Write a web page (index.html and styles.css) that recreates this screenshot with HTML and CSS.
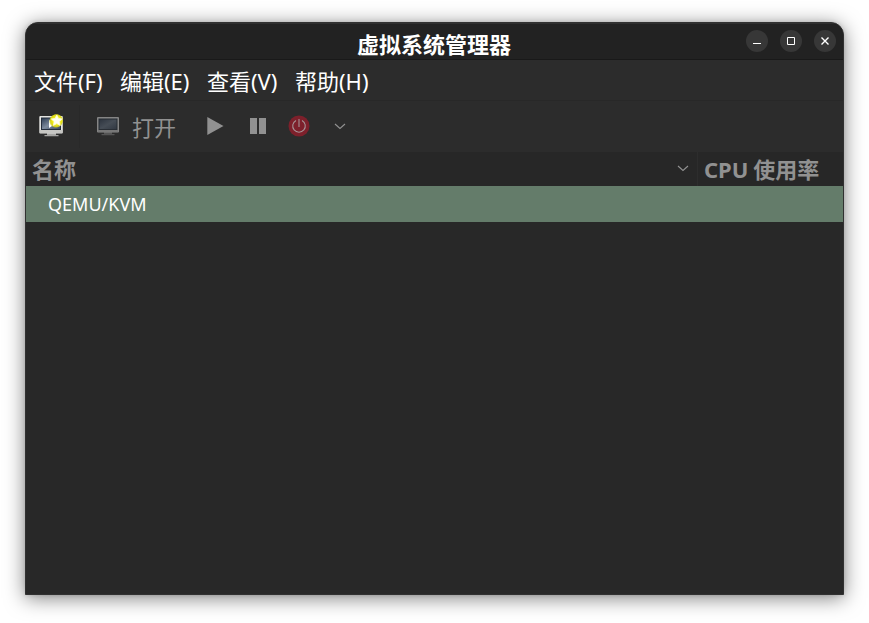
FILE: index.html
```
<!DOCTYPE html>
<html lang="zh-CN">
<head>
<meta charset="utf-8">
<title>虚拟系统管理器</title>
<link rel="stylesheet" href="styles.css">
</head>
<body>
<main class="window">
  <header class="titlebar">
    <h1 class="title">虚拟系统管理器</h1>
    <div class="controls">
      <span class="control"><svg width="22" height="22"><path d="M7 13.500h8" stroke="#fff"/></svg></span>
      <span class="control"><svg width="22" height="22"><path d="M7.500 7.500h7v7h-7z" fill="none" stroke="#fff"/></svg></span>
      <span class="control"><svg width="22" height="22"><path d="M7.500 7.500l7 7M14.500 7.500l-7 7" stroke="#fff" stroke-width="1.400"/></svg></span>
    </div>
  </header>
  <nav class="menubar">
    <span class="menu file">文件<span class="key">(F)</span></span>
    <span class="menu edit">编辑<span class="key">(E)</span></span>
    <span class="menu view">查看<span class="key">(V)</span></span>
    <span class="menu help">帮助<span class="key">(H)</span></span>
  </nav>
  <div class="toolbar">
    <div class="new">
      <svg width="26" height="26" viewBox="0 0 26 26">
        <defs>
          <linearGradient id="screen" x2="1" y2="1"><stop stop-color="#29384e"/><stop offset=".5" stop-color="#7d8b9d"/><stop offset="1" stop-color="#35445a"/></linearGradient>
          <radialGradient id="glow"><stop offset=".6" stop-color="#f2ee12"/><stop offset=".85" stop-color="#d8d51b" stop-opacity=".8"/><stop offset="1" stop-color="#c9c51b" stop-opacity="0"/></radialGradient>
        </defs>
        <path d="M9 20h9v2h2.500v1.300h-14V22H9z" fill="#a4a4a2"/>
        <rect x="1.300" y="3" width="23.500" height="17.500" rx="1" fill="#e4e4e1"/>
        <path d="M2 17h22v3H2z" fill="#c6c6c3"/>
        <rect x="3.500" y="5" width="19" height="11.500" fill="url(#screen)" stroke="#252e3c"/>
        <path d="M11 7l6 4-6 4z" fill="#fff"/>
        <path d="M11 1h14v14H11z" fill="url(#glow)"/>
        <circle cx="18.600" cy="7.500" r="6.800" fill="url(#glow)"/>
        <path d="M18.800 2l1.700 3.400 3.800.5-2.800 2.700.7 3.800-3.400-1.800-3.400 1.800.7-3.800-2.800-2.700 3.800-.5z" fill="#fffff4" stroke="#fffbd0" stroke-width=".8"/>
      </svg>
    </div>
    <div class="open">
      <svg width="22" height="20" viewBox="0 0 22 20">
        <defs><linearGradient id="dim" x2="1" y2="1"><stop stop-color="#2b323d"/><stop offset=".5" stop-color="#464d56"/><stop offset="1" stop-color="#303741"/></linearGradient></defs>
        <path d="M7 15h8v2h2.500v1.300h-13V17H7z" fill="#555"/>
        <rect width="22" height="15.500" rx="1" fill="#858585"/>
        <path d="M1 13h20v2H1z" fill="#777"/>
        <rect x="2" y="2" width="18" height="10.500" fill="url(#dim)" stroke="#292e35"/>
      </svg>
      <span>打开</span>
    </div>
    <svg class="play" width="17" height="18"><path d="M.3 0L16.500 9 .3 18z" fill="#919191"/></svg>
    <svg class="pause" width="16" height="16"><path d="M0 0h7v16H0zM9 0h7v16H9z" fill="#919191"/></svg>
    <svg class="power" width="22" height="22"><circle cx="11" cy="11" r="10.500" fill="#7d202b"/><path d="M8 5.400a6.300 6.300 0 1 0 6 0M11 4v8" fill="none" stroke="#a49295" stroke-width="1.100"/></svg>
    <svg class="arrow" width="12" height="7"><path d="M1 1l5 4.500L11 1" fill="none" stroke="#919191" stroke-width="1.100"/></svg>
  </div>
  <div class="columns">
    <div class="column name"><span>名称</span><svg width="12" height="7"><path d="M1 1l5 4.500L11 1" fill="none" stroke="#919191" stroke-width="1.100"/></svg></div>
    <div class="column cpu">CPU 使用率</div>
  </div>
  <div class="row">QEMU/KVM</div>
  <section class="empty"></section>
</main>
</body>
</html>
```
FILE: styles.css
```
* { box-sizing: border-box; }
body {
  margin: 0;
  height: 623px;
  padding: 22px 25px 28px;
  overflow: hidden;
  background: #fff;
  font: 22px/32px "Noto Sans", "Noto Sans CJK SC", sans-serif;
}
svg { display: block; flex: none; }
.window {
  width: 819px;
  height: 573px;
  display: flex;
  flex-direction: column;
  overflow: hidden;
  border: 1px solid #313131;
  border-radius: 13px 13px 0 0;
  background: #282828;
  color: #fff;
  box-shadow: 0 3px 20px rgba(0, 0, 0, .5), 0 0 4px rgba(0, 0, 0, .12);
}
.titlebar {
  height: 37px;
  flex: none;
  display: grid;
  grid-template-columns: 1fr auto 1fr;
  background: #222;
  border-top: 1px solid #303030;
  border-bottom: 1px solid #191919;
}
.title {
  grid-column: 2;
  margin: 3px 1px 0 0;
  font: 700 22px/32px "Noto Sans CJK SC", sans-serif;
}
.controls {
  display: flex;
  justify-content: flex-end;
  gap: 12px;
  padding: 6px 7px 0 0;
}
.control { width: 22px; height: 22px; border-radius: 50%; background: #373737; }
.menubar {
  height: 41px;
  flex: none;
  display: flex;
  padding: 5px 0 0 8px;
  background: #2c2c2c;
  border-bottom: 1px solid #282828;
  white-space: nowrap;
}
.file { width: 86px; }
.edit { width: 87px; }
.view { width: 88px; }
.toolbar {
  height: 51px;
  flex: none;
  display: flex;
  align-items: flex-start;
  background: #2c2c2c;
  color: #919191;
}
.new { height: 43px; width: 54px; margin-top: 4px; padding: 8px 0 0 12px; border-right: 1px solid #292929; }
.open { display: flex; width: 110px; margin: 10px 0 0 17px; gap: 13px; }
.open svg { margin-top: 6px; }
.play { margin-top: 16px; }
.pause { margin: 17px 0 0 26px; }
.power { margin: 14px 0 0 22px; }
.arrow { margin: 22px 0 0 24px; }
.columns {
  height: 34px;
  flex: none;
  display: flex;
  background: #272727;
  color: #919191;
  font-weight: 700;
}
.column { padding-top: 1px; }
.name { width: 672px; display: flex; justify-content: space-between; padding-left: 6px; padding-right: 8px; border-right: 1px solid #2d2d2d; }
.name svg { margin-top: 12px; }
.cpu { padding-left: 6px; word-spacing: -1px; }
.row {
  height: 36px;
  flex: none;
  padding-left: 22px;
  background: #647c6a;
  font-size: 18px;
  line-height: 36px;
}
.empty { flex: 1; }
```
